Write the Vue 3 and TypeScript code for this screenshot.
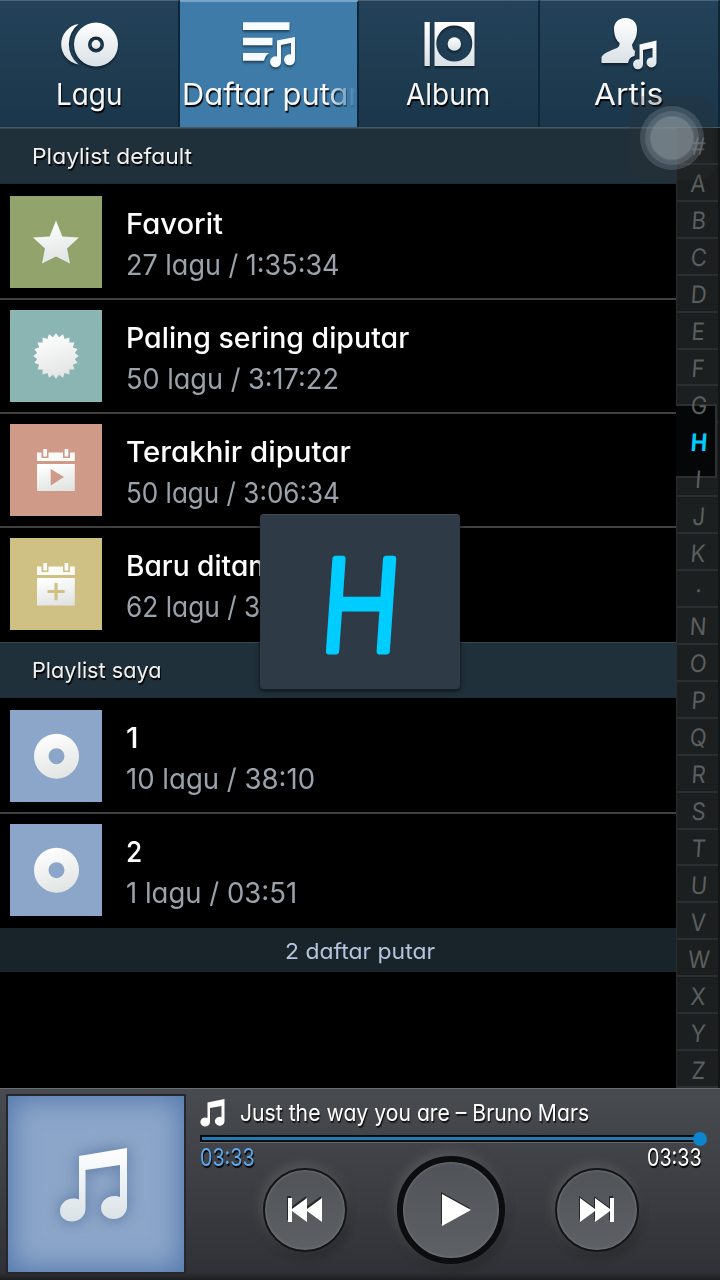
<script setup lang="ts">
import type { Directive } from 'vue'

interface Playlist {
  title: string
  width: number
  info: string
  infoWidth: number
  icon: 'star' | 'badge' | 'play' | 'plus' | 'disc'
}

const defaults: Playlist[] = [
  { title: 'Favorit', width: 97, info: '27 lagu / 1:35:34', infoWidth: 214, icon: 'star' },
  { title: 'Paling sering diputar', width: 283, info: '50 lagu / 3:17:22', infoWidth: 213, icon: 'badge' },
  { title: 'Terakhir diputar', width: 225, info: '50 lagu / 3:06:34', infoWidth: 214, icon: 'play' },
  { title: 'Baru ditambahkan', width: 248, info: '62 lagu / 3:53:20', infoWidth: 214, icon: 'plus' },
]
const mine: Playlist[] = [
  { title: '1', width: 13, info: '10 lagu / 38:10', infoWidth: 189, icon: 'disc' },
  { title: '2', width: 16, info: '1 lagu / 03:51', infoWidth: 171, icon: 'disc' },
]
const groups = [
  { name: 'Playlist default', width: 160, items: defaults },
  { name: 'Playlist saya', width: 129, items: mine },
]
const letters = '#ABCDEFGHIJK·NOPQRSTUVWXYZ'.split('')

// Condenses or widens a label so it takes exactly the given number of pixels.
const vFit: Directive<HTMLElement, number> = {
  mounted(el, { value }) {
    const natural = el.offsetWidth
    el.style.transform = `scaleX(${value / natural})`
    el.style.marginRight = `${value - natural}px`
  },
}

// Serrated outline of the "most played" badge.
const badge = Array.from({ length: 40 }, (_, i) => {
  const r = i % 2 ? 19 : 22.8
  const a = (i * Math.PI) / 20 - Math.PI / 2
  return `${(46 + r * Math.cos(a)).toFixed(1)},${(46 + r * Math.sin(a)).toFixed(1)}`
}).join(' ')
</script>

<template>
  <main class="screen">
    <svg class="defs" width="0" height="0">
      <defs>
        <linearGradient id="silver" x1="0" y1="0" x2="0" y2="1">
          <stop offset="0" stop-color="#ffffff" />
          <stop offset="1" stop-color="#d9e1e6" />
        </linearGradient>
        <linearGradient id="pearl" x1="0.3" y1="0" x2="0.6" y2="1">
          <stop offset="0" stop-color="#ffffff" />
          <stop offset="1" stop-color="#e0e4e2" />
        </linearGradient>
      </defs>
    </svg>

    <nav class="tabs">
      <div class="tab">
        <svg class="tab-icon" viewBox="0 0 60 56" fill="url(#silver)">
          <path d="M19.500 4A20.500 20.500 0 0 0 19.500 44.500A26 26 0 0 1 19.500 4Z" />
          <path fill-rule="evenodd" d="M37 2.500a22 22 0 1 1 0 44a22 22 0 1 1 0-44ZM37 16.500a8 8 0 1 0 0 16a8 8 0 1 0 0-16Z" />
          <circle cx="37" cy="24.500" r="4.400" />
        </svg>
        <span class="tab-label"><span v-fit="66" class="fit">Lagu</span></span>
      </div>
      <div class="tab active">
        <svg class="tab-icon" viewBox="0 0 60 56" fill="#f7fbfd">
          <path d="M4 2.300H50.500V10H4ZM4 17.700H33.500V25.300H4ZM4 33H30Q26 36 25 40.700H4Z" />
          <path d="M38 20.500L56 17V39.500A5.500 5.500 0 1 1 52 34.500V23L42 25V41.500A5.500 5.500 0 1 1 38 36.500Z" />
        </svg>
        <span class="tab-label faded"><span v-fit="178" class="fit">Daftar putar</span></span>
      </div>
      <div class="tab">
        <svg class="tab-icon" viewBox="0 0 60 56" fill="url(#silver)">
          <path d="M5.500 2H10.800V46H5.500Z" />
          <path fill-rule="evenodd" d="M15.500 2H55.500V46H15.500ZM35.300 5.500a18 18 0 1 0 0 36a18 18 0 1 0 0-36Z" />
          <circle cx="35.300" cy="24" r="6.700" />
        </svg>
        <span class="tab-label"><span v-fit="84" class="fit">Album</span></span>
      </div>
      <div class="tab">
        <svg class="tab-icon" viewBox="0 0 60 56" fill="url(#silver)">
          <path d="M26.500-2C34-2 38.500 3 38 10C37.800 18 35 21 33 25L34 29L36 31L35.500 36Q30 37 29 43H2.500V37Q4 33 18 28Q21 26 20.500 23Q15.500 19 15 10C14.500 3 19-2 26.500-2Z" />
          <path d="M40.500 24.500L57.500 20.500V42A5 5 0 1 1 53.500 37.500V28L44 30V44.500A5 5 0 1 1 40.500 39.500Z" />
        </svg>
        <span class="tab-label"><span v-fit="69" class="fit">Artis</span></span>
      </div>
    </nav>

    <div class="body">
      <div class="list">
        <section v-for="g in groups" :key="g.name">
          <h2 class="group"><span v-fit="g.width" class="fit">{{ g.name }}</span></h2>
          <article v-for="p in g.items" :key="p.title" class="row">
            <svg class="thumb" :class="p.icon" viewBox="0 0 92 92" fill="url(#pearl)">
              <path v-if="p.icon === 'star'" d="M46 24.500L52.300 40.500L69 41.500L57 52.500L60 67.500L46 60.500L32 67.500L35 52.500L23 41.500L39.700 40.500Z" />
              <polygon v-else-if="p.icon === 'badge'" :points="badge" />
              <path v-else-if="p.icon === 'disc'" fill-rule="evenodd" d="M46.500 23.700a22.500 22.500 0 1 1 0 45a22.500 22.500 0 1 1 0-45ZM46.500 38.200a8 8 0 1 0 0 16a8 8 0 1 0 0-16Z" />
              <template v-else>
                <path fill="#fbfbf9" d="M27 28.500H31.500V34H38.500V28.500H53V34H60V28.500H64.800V37H27Z" />
                <path fill="#fbfbf9" d="M33.300 25H37V32.500H33.300ZM54.600 25H58.300V32.500H54.600Z" />
                <path v-if="p.icon === 'play'" fill-rule="evenodd" d="M27 40H64.800V67H27ZM40.700 45V61.500L54 53Z" />
                <path v-else fill-rule="evenodd" d="M27 40H64.800V67.500H27ZM44.500 45V52H37.500V55H44.500V62.200H47.600V55H54.700V52H47.600V45Z" />
              </template>
            </svg>
            <div class="texts">
              <div class="title"><span v-fit="p.width" class="fit">{{ p.title }}</span></div>
              <div class="info"><span v-fit="p.infoWidth" class="fit">{{ p.info }}</span></div>
            </div>
          </article>
        </section>
        <div class="count"><span v-fit="150" class="fit">2 daftar putar</span></div>
      </div>

      <aside class="index">
        <div class="marker"></div>
        <div v-for="l in letters" :key="l" class="letter" :class="{ on: l === 'H' }"><span>{{ l }}</span></div>
      </aside>
    </div>

    <footer class="player">
      <div class="cover">
        <svg viewBox="0 0 176 176">
          <path fill="url(#silver)" d="M71 60L119 52V110.500C119 117.500 113 123 106 123C98 123 93 118 93 112C93 105 99 100 106 100C109 100 110.500 100.500 112 101V69L77.500 74V113C77.500 120 71 125.500 64 125.500C57 125.500 52 121 52 115C52 108 58 102.500 65 102.500C68 102.500 70 103 71 103.500Z" />
        </svg>
      </div>
      <div class="panel">
        <div class="now">
          <svg class="note" viewBox="0 0 26 28" fill="#fff">
            <path d="M7.500 3.500L24.500 0V22A4.800 4.500 0 1 1 21.500 18V7L10 9V23A4.800 4.500 0 1 1 7.500 19Z" />
          </svg>
          <span v-fit="349" class="fit">Just the way you are – Bruno Mars</span>
        </div>
        <div class="track"><i class="knob"></i></div>
        <div class="times">
          <span class="elapsed"><span v-fit="55" class="fit">03:33</span></span>
          <span><span v-fit="55" class="fit">03:33</span></span>
        </div>
        <div class="controls">
          <button class="btn" aria-label="Previous">
            <svg viewBox="0 0 36 26"><path d="M1 1H5V12L20 1V12L35 1V25L20 14V25L5 14V25H1Z" /></svg>
          </button>
          <button class="btn big" aria-label="Play">
            <svg viewBox="0 0 36 34"><path d="M5 1L34 17L5 33Z" /></svg>
          </button>
          <button class="btn" aria-label="Next">
            <svg viewBox="0 0 36 26"><path d="M35 1H31V12L16 1V12L1 1V25L16 14V25L31 14V25H35Z" /></svg>
          </button>
        </div>
      </div>
    </footer>

    <div class="popup">
      <svg viewBox="0 0 200 174"><text x="0" y="0" transform="translate(98 136) skewX(-4) scale(0.84 1)">H</text></svg>
    </div>
    <div class="assist"><i class="ring"><i class="mid"><i class="core"></i></i></i></div>
  </main>
</template>

<style>
body {
  margin: 0;
  background: #000;
}
</style>

<style scoped>
.screen {
  position: relative;
  width: 720px;
  height: 1280px;
  overflow: hidden;
  display: flex;
  flex-direction: column;
  background: #000;
  color: #fff;
  font-family: Inter, 'Open Sans', sans-serif;
  font-feature-settings: 'cv11' 1, 'ss03' 1;
  box-sizing: border-box;
}
.screen * {
  box-sizing: border-box;
}
.defs {
  position: absolute;
}
.fit {
  display: inline-block;
  white-space: pre;
  transform-origin: 0 50%;
}
.tabs {
  display: grid;
  grid-template-columns: 180px 179px 181px 180px;
  height: 128px;
  flex: none;
  border-bottom: 1px solid #455965;
}
.tab {
  display: flex;
  flex-direction: column;
  align-items: center;
  padding-top: 19px;
  overflow: hidden;
  border-top: 1px solid #4c6473;
  border-right: 2px solid #0f2638;
  background: linear-gradient(#234259, #1b364a);
}
.tab.active {
  background: #3e7ba8;
  border-top: 2px solid #79a5c6;
  padding-top: 18px;
}
.tab-icon {
  width: 60px;
  height: 56px;
  flex: none;
  overflow: visible;
  filter: drop-shadow(0 2px 1px rgba(0, 0, 0, 0.45));
}
.tab-label {
  height: 38px;
  line-height: 36px;
  font-size: 30px;
  color: #f5f7f8;
  text-shadow: 1px 2px 1px #000;
}
.faded {
  width: 100%;
  padding-left: 2px;
  white-space: nowrap;
  overflow: hidden;
  mask-image: linear-gradient(90deg, #000 146px, transparent 176px);
}
.body {
  display: flex;
  height: 960px;
  flex: none;
}
.list {
  width: 676px;
}
.group {
  height: 56px;
  width: 720px;
  margin: 0 0 2px;
  padding: 0 0 0 32px;
  line-height: 55px;
  font-size: 22px;
  font-weight: 400;
  color: #f0f1f1;
  text-shadow: 1px 2px 1px #000;
  border-top: 1px solid #34464f;
  border-bottom: 1px solid #1b2c33;
  background: #20303a;
}
.row {
  display: flex;
  height: 114px;
  border-bottom: 2px solid #414141;
}
.row:last-child {
  border-bottom: 0;
}
.thumb {
  width: 92px;
  height: 92px;
  margin: 10px 24px 10px 10px;
}
.star {
  background: #92a46c;
}
.badge {
  background: #8ab5b3;
}
.play {
  background: #cf9a88;
}
.plus {
  background: #cfc084;
}
.disc {
  background: #8ca6c9;
}
.texts {
  padding-top: 18px;
  font-size: 28px;
  line-height: 41px;
  white-space: nowrap;
}
.title {
  height: 41px;
  font-weight: 500;
}
.info {
  height: 41px;
  color: #9aa3ab;
}
.count {
  height: 44px;
  line-height: 46px;
  width: 720px;
  text-align: center;
  font-size: 22px;
  color: #b3c4dc;
  background: #19242a;
}
.index {
  position: relative;
  width: 44px;
  display: grid;
  grid-template-rows: repeat(26, 1fr);
  background: #1b1f20;
  border-left: 1px solid #292d2e;
  border-right: 2px solid #131617;
  color: #5b5e5f;
  font-size: 24px;
  font-weight: 400;
}
.letter {
  display: flex;
  align-items: center;
  justify-content: center;
  min-height: 0;
  padding: 4px 0 0 2px;
  border-bottom: 2px solid #2b2f31;
}
.letter span {
  position: relative;
  line-height: 30px;
  transform: skewX(-4deg) scaleX(0.92);
}
.letter.on {
  border-color: transparent;
  color: #00cdff;
  font-weight: 700;
}
.marker {
  position: absolute;
  left: -1px;
  top: 276px;
  width: 41px;
  height: 74px;
  background: #050607;
  border: 2px solid #2d3031;
  border-left: 0;
}
.player {
  display: flex;
  height: 192px;
  flex: none;
  position: relative;
  background: linear-gradient(#484b50, #3b3d42 55%, #303136 96%, #1d1e21);
  border-top: 1px solid #6b6e71;
}
.cover {
  width: 180px;
  height: 180px;
  margin: 5px 14px 0 6px;
  border: 2px solid #25272b;
  background: #8ca6c9;
  box-shadow: inset 0 0 26px 4px #5478ad;
}
.cover svg {
  display: block;
  width: 176px;
  height: 176px;
  filter: drop-shadow(0 0 8px rgba(65, 95, 140, 0.7));
}
.panel {
  width: 502px;
}
.now {
  display: flex;
  align-items: center;
  height: 46px;
  padding-top: 1px;
  font-size: 23px;
  text-shadow: 1px 2px 1px #111;
}
.note {
  width: 26px;
  height: 28px;
  margin-right: 14px;
}
.track {
  position: relative;
  width: 506px;
  height: 7px;
  background: #2679ae;
  border: solid #050c12;
  border-width: 2px 0 2px 2px;
  box-shadow: 0 1px 0 #66696d;
}
.knob {
  position: absolute;
  right: -1px;
  top: -5px;
  width: 14px;
  height: 14px;
  border-radius: 50%;
  background: #0c85cc;
}
.times {
  display: flex;
  justify-content: space-between;
  height: 30px;
  line-height: 32px;
  font-size: 24px;
  text-shadow: 1px 2px 1px #000;
}
.elapsed {
  color: #5caaf2;
}
.controls {
  display: flex;
  justify-content: center;
  align-items: center;
  gap: 50px;
  height: 108px;
  margin-top: -16px;
}
.btn {
  display: flex;
  align-items: center;
  justify-content: center;
  width: 84px;
  height: 84px;
  padding: 0;
  border: 2px solid #141518;
  border-radius: 50%;
  background: linear-gradient(#505459, #5d6165);
  box-shadow: -2px -3px 12px rgba(130, 130, 130, 0.4), 2px 5px 9px rgba(20, 20, 22, 0.4), inset 0 0 3px #85888b;
}
.btn svg {
  width: 36px;
  height: 26px;
  fill: #fff;
  filter: drop-shadow(-1px -2px 0 #26282b);
}
.btn.big {
  width: 108px;
  height: 108px;
  border: 6px solid #0c0d0f;
}
.big svg {
  width: 36px;
  height: 34px;
  margin-left: 8px;
}
.popup {
  position: absolute;
  left: 260px;
  top: 514px;
  width: 200px;
  height: 175px;
  border-radius: 4px;
  background: #2e3b46;
  border-top: 1px solid #424c54;
  box-shadow: 0 2px 5px rgba(0, 0, 0, 0.6);
}
.popup svg {
  display: block;
  width: 200px;
  height: 174px;
}
.popup text {
  font-size: 126px;
  font-weight: 300;
  text-anchor: middle;
  fill: #00cdff;
  stroke: #00cdff;
  stroke-width: 7px;
  stroke-linejoin: round;
}
.assist {
  position: absolute;
  left: 630px;
  top: 96px;
  width: 84px;
  height: 84px;
  border-radius: 14px;
  background: rgba(50, 50, 50, 0.22);
  display: flex;
  align-items: center;
  justify-content: center;
}
.assist i {
  display: flex;
  align-items: center;
  justify-content: center;
  border-radius: 50%;
}
.ring {
  width: 64px;
  height: 64px;
  background: rgba(140, 155, 165, 0.28);
}
.mid {
  width: 54px;
  height: 54px;
  background: rgba(140, 155, 165, 0.28);
}
.core {
  width: 42px;
  height: 42px;
  background: rgba(150, 160, 165, 0.42);
  box-shadow: 0 0 2px #9aa5ac;
}
</style>
